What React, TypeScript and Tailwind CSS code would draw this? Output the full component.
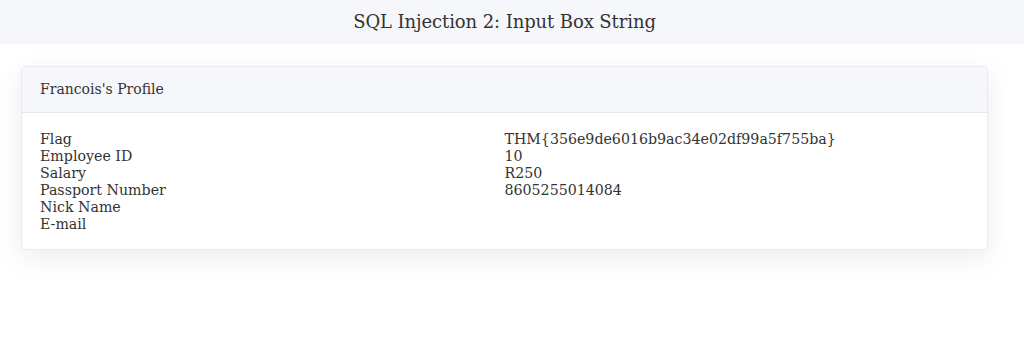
import React from "react";

const rows: [string, string][] = [
  ["Flag", "THM{356e9de6016b9ac34e02df99a5f755ba}"],
  ["Employee ID", "10"],
  ["Salary", "R250"],
  ["Passport Number", "8605255014084"],
  ["Nick Name", ""],
  ["E-mail", ""],
];

export default function App() {
  return (
    <div className="min-h-[346px] bg-white text-[#333] [font-family:'DejaVu_Serif',serif]">
      <div className="h-[44px] bg-[#f6f7fb]">
        <div className="w-[1009px] h-full flex items-center justify-center">
          <h1 className="text-[18px] leading-[22px] tracking-[-0.1px]">SQL Injection 2: Input Box String</h1>
        </div>
      </div>
      <div className="w-[1009px] px-[21px] pt-[22px]">
        <div className="rounded-[4px] border border-[#e9eaf0] bg-white shadow-[0_8px_28px_rgba(0,0,0,0.08)]">
          <div className="h-[46px] bg-[#f6f7fb] border-b border-[#e6e7ee] rounded-t-[4px] flex items-center px-[18px] text-[14px]">
            Francois's Profile
          </div>
          <div className="px-[18px] pt-[18px] pb-[16px] text-[14.2px] leading-[17px]">
            {rows.map(([k, v]) => (
              <div key={k} className="grid grid-cols-2">
                <div>{k}</div>
                <div>{v}</div>
              </div>
            ))}
          </div>
        </div>
      </div>
    </div>
  );
}
